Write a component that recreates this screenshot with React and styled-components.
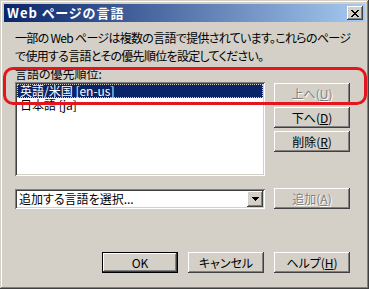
import React from 'react';
import styled, { createGlobalStyle } from 'styled-components';

const GlobalStyle = createGlobalStyle`
  html, body {
    margin: 0;
    padding: 0;
    background: #d4d0c8;
  }
  body {
    font-family: "Noto Sans CJK JP", "Liberation Sans", sans-serif;
    font-size: 12px;
    font-feature-settings: "palt";
    color: #000;
  }
`;

const raised = `
  box-shadow: inset -1px -1px #404040, inset 1px 1px #ffffff,
    inset -2px -2px #808080, inset 2px 2px #d4d0c8;
`;

const sunken = `
  box-shadow: inset 1px 1px #808080, inset -1px -1px #ffffff,
    inset 2px 2px #404040, inset -2px -2px #d4d0c8;
`;

const Window = styled.div`
  position: relative;
  box-sizing: border-box;
  width: 369px;
  height: 289px;
  padding: 4px;
  background: #d4d0c8;
  box-shadow: inset -1px -1px #404040, inset 1px 1px #d4d0c8,
    inset -2px -2px #808080, inset 2px 2px #ffffff;
  display: flex;
  flex-direction: column;
`;

const TitleBar = styled.div`
  height: 18px;
  display: flex;
  align-items: center;
  justify-content: space-between;
  padding: 0 2px 0 3px;
  background: linear-gradient(to right, #0a246a, #a6caf0);
`;

const TitleText = styled.span`
  color: #fff;
  font-weight: bold;
  font-size: 13px;
  letter-spacing: 1px;
  line-height: 18px;
  white-space: nowrap;
`;

const CloseButton = styled.div`
  width: 16px;
  height: 14px;
  background: #d4d0c8;
  ${raised}
  display: flex;
  align-items: center;
  justify-content: center;
`;

const Body = styled.div`
  flex: 1;
  display: flex;
  flex-direction: column;
  padding: 0 15px 12px 11px;
`;

const Description = styled.div`
  margin-top: 7px;
  line-height: 18px;
  letter-spacing: -0.7px;
  white-space: nowrap;
`;

const GroupLabel = styled.div`
  margin-top: 2px;
  line-height: 14px;
`;

const Row = styled.div`
  display: flex;
  gap: 9px;
  margin-top: ${(p) => p.$top || 0}px;
  align-items: ${(p) => p.$align || 'flex-start'};
`;

const ListBox = styled.div`
  box-sizing: border-box;
  width: 250px;
  height: 94px;
  padding: 2px;
  background: #fff;
  ${sunken}
`;

const ListItem = styled.div`
  height: 14px;
  line-height: 14px;
  padding: 0 3px;
  white-space: nowrap;
  background: ${(p) => (p.$selected ? '#0a246a' : 'transparent')};
  color: ${(p) => (p.$selected ? '#fff' : '#000')};
  outline: ${(p) => (p.$selected ? '1px dotted #d4d0c8' : 'none')};
  outline-offset: -1px;
`;

const SideButtons = styled.div`
  display: flex;
  flex-direction: column;
  gap: 3px;
  margin-top: 1px;
`;

const Button = styled.div`
  box-sizing: border-box;
  width: 76px;
  height: 21px;
  display: flex;
  align-items: center;
  justify-content: center;
  background: #d4d0c8;
  white-space: nowrap;
  color: ${(p) => (p.$disabled ? '#808080' : '#000')};
  text-shadow: ${(p) => (p.$disabled ? '1px 1px #ffffff' : 'none')};
  ${(p) =>
    p.$default
      ? `box-shadow: inset 0 0 0 1px #000, inset -2px -2px #404040, inset 2px 2px #ffffff,
          inset -3px -3px #808080;`
      : raised}
`;

const Combo = styled.div`
  box-sizing: border-box;
  width: 250px;
  height: 20px;
  padding: 2px;
  display: flex;
  align-items: center;
  background: #fff;
  ${sunken}
`;

const ComboText = styled.span`
  flex: 1;
  padding-left: 2px;
  line-height: 16px;
  white-space: nowrap;
`;

const DropButton = styled.div`
  width: 16px;
  height: 16px;
  background: #d4d0c8;
  ${raised}
  display: flex;
  align-items: center;
  justify-content: center;
`;

const Footer = styled.div`
  margin-top: auto;
  display: flex;
  justify-content: flex-end;
  gap: 10px;
`;

const Highlight = styled.div`
  position: absolute;
  left: 3px;
  top: 67px;
  width: 364px;
  height: 38px;
  box-sizing: border-box;
  border: 3px solid #e3161d;
  border-radius: 10px;
  pointer-events: none;
`;

const App = () => {
  return (
    <>
      <GlobalStyle />
      <Window>
        <TitleBar>
          <TitleText>Web ページの言語</TitleText>
          <CloseButton>
            <svg width="8" height="7" viewBox="0 0 8 7" shapeRendering="crispEdges">
              <path d="M0 0h2v1h-2zM6 0h2v1h-2zM1 1h2v1h-2zM5 1h2v1h-2zM2 2h4v1h-4zM3 3h2v1h-2zM2 4h4v1h-4zM1 5h2v1h-2zM5 5h2v1h-2zM0 6h2v1h-2zM6 6h2v1h-2z" fill="#000" />
            </svg>
          </CloseButton>
        </TitleBar>
        <Body>
          <Description>
            一部の Web ページは複数の言語で提供されています。これらのページ
            <br />
            で使用する言語とその優先順位を設定してください。
          </Description>
          <GroupLabel>言語の優先順位:</GroupLabel>
          <Row $top={1}>
            <ListBox>
              <ListItem $selected>英語/米国 [en-us]</ListItem>
              <ListItem>日本語 [ja]</ListItem>
            </ListBox>
            <SideButtons>
              <Button $disabled>
                上へ(<u>U</u>)
              </Button>
              <Button>
                下へ(<u>D</u>)
              </Button>
              <Button>
                削除(<u>R</u>)
              </Button>
            </SideButtons>
          </Row>
          <Row $top={12} $align="center">
            <Combo>
              <ComboText>追加する言語を選択...</ComboText>
              <DropButton>
                <svg width="7" height="4" viewBox="0 0 7 4" shapeRendering="crispEdges">
                  <path d="M0 0h7v1h-7zM1 1h5v1h-5zM2 2h3v1h-3zM3 3h1v1h-1z" fill="#000" />
                </svg>
              </DropButton>
            </Combo>
            <Button $disabled>
              追加(<u>A</u>)
            </Button>
          </Row>
          <Footer>
            <Button $default>OK</Button>
            <Button>キャンセル</Button>
            <Button>
              ヘルプ(<u>H</u>)
            </Button>
          </Footer>
        </Body>
        <Highlight />
      </Window>
    </>
  );
};

export default App;
